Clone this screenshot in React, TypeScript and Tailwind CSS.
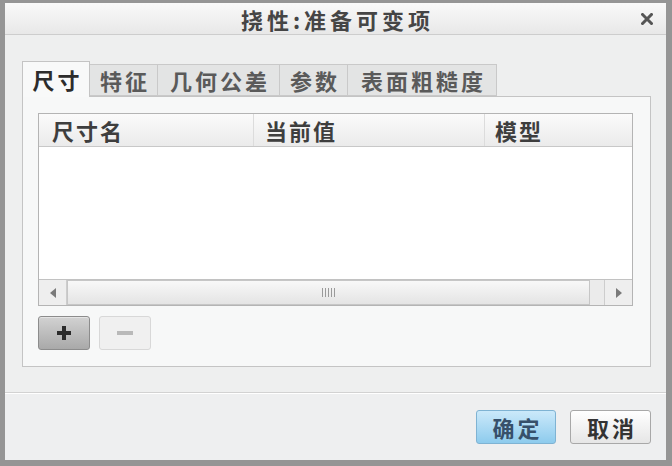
import React from 'react';

const cjk = { fontFamily: '"Noto Sans CJK SC", "Noto Sans", sans-serif' };

const tabs = ['尺寸', '特征', '几何公差', '参数', '表面粗糙度'];
const tabWidths = ['w-[68px]', 'w-[68px]', 'w-[122px]', 'w-[68px]', 'w-[149px]'];

export default function App() {
  return (
    <div
      style={cjk}
      className="w-[672px] h-[466px] flex flex-col bg-[#ececec] border-[#959595] border-l-[5px] border-r-[6px] border-t-[3px] border-b-[6px]"
    >
      {/* title bar */}
      <div className="relative h-[32px] flex items-center justify-center border-b border-[#cdcdcd] bg-gradient-to-b from-[#f9f9f9] to-[#e8e8e8]">
        <span className="text-[22px] font-bold tracking-[4px] text-[#454545] leading-none pl-[4px]">挠性:准备可变项</span>
        <svg className="absolute right-[13px] top-[10px]" width="12" height="12" viewBox="0 0 12 12">
          <path d="M1.5 1.5 L10.5 10.5 M10.5 1.5 L1.5 10.5" stroke="#555" strokeWidth="3" strokeLinecap="square" />
        </svg>
      </div>

      {/* body */}
      <div className="flex-1 flex flex-col pt-[26px] bg-[#eeefef]">
        <div className="pl-[17px] pr-[15px]">
          {/* tabs */}
          <div className="flex items-end h-[35px]">
            {tabs.map((t, i) => (
              <div
                key={t}
                className={
                  i === 0
                    ? `${tabWidths[i]} relative z-10 -mb-px h-[36px] flex items-center justify-center bg-[#f8f9f9] border border-b-0 border-[#c4c4c4] text-[22px] font-bold tracking-[3px] text-[#2c2c2c]`
                    : `${tabWidths[i]} h-[32px] flex items-center justify-center bg-[#e3e4e4] border border-l-0 border-[#c9c9c9] text-[22px] font-bold tracking-[3px] text-[#5a5a5a]`
                }
              >
                <span className="pl-[3px]">{t}</span>
              </div>
            ))}
          </div>

          {/* panel */}
          <div className="h-[271px] border border-[#c4c4c4] bg-[#f7f8f8] pt-[16px] pl-[15px]">
            {/* table */}
            <div className="w-[595px] h-[193px] border border-[#b4b4b4] flex flex-col bg-white">
              <div className="h-[33px] flex border-b border-[#c8c8c8] bg-gradient-to-b from-[#fbfbfb] to-[#ebebeb] text-[22px] font-bold tracking-[2px] text-[#3e3e3e]">
                <div className="w-[215px] pl-[13px] flex items-center border-r border-[#dcdcdc]">尺寸名</div>
                <div className="w-[231px] pl-[11px] flex items-center border-r border-[#dcdcdc]">当前值</div>
                <div className="flex-1 pl-[10px] flex items-center">模型</div>
              </div>
              <div className="flex-1 bg-white" />
              {/* scrollbar */}
              <div className="h-[26px] flex border-t border-[#c2c2c2] bg-[#ececec]">
                <div className="w-[28px] flex items-center justify-center border-r border-[#cdcdcd] bg-[#eeeeee]">
                  <span className="w-0 h-0 border-y-[5px] border-y-transparent border-r-[6px] border-r-[#7a7a7a]" />
                </div>
                <div className="flex-1 flex items-center justify-center border border-[#c6c6c6] bg-gradient-to-b from-[#f8f8f8] to-[#e4e4e4]">
                  <div className="flex gap-[2px]">
                    {[0, 1, 2, 3, 4].map(k => (
                      <span key={k} className="w-px h-[9px] bg-[#9a9a9a]" />
                    ))}
                  </div>
                </div>
                <div className="w-[14px] bg-[#ebebeb]" />
                <div className="w-[28px] flex items-center justify-center border-l border-[#cdcdcd] bg-[#eeeeee]">
                  <span className="w-0 h-0 border-y-[5px] border-y-transparent border-l-[6px] border-l-[#7a7a7a]" />
                </div>
              </div>
            </div>

            {/* add / remove */}
            <div className="flex gap-[9px] mt-[10px]">
              <div className="w-[52px] h-[34px] flex items-center justify-center rounded-[3px] border border-[#8c8c8c] bg-gradient-to-b from-[#d2d2d2] to-[#a9a9a9] shadow-[inset_0_1px_0_#e4e4e4]">
                <svg width="16" height="16" viewBox="0 0 16 16">
                  <rect x="6" y="1" width="4" height="14" fill="#2b2b2b" />
                  <rect x="1" y="6" width="14" height="4" fill="#2b2b2b" />
                </svg>
              </div>
              <div className="w-[52px] h-[34px] flex items-center justify-center rounded-[3px] border border-[#d8d8d8] bg-[#f0f0f0]">
                <span className="w-[16px] h-[4px] bg-[#b9b9b9]" />
              </div>
            </div>
          </div>
        </div>

        {/* separator */}
        <div className="mt-[25px] h-[2px] border-t border-[#d2d2d2] bg-white" />

        {/* footer */}
        <div className="flex-1 bg-[#eeeff0] flex justify-end items-start pt-[16px] pr-[15px] gap-[14px]">
          <div className="w-[80px] h-[34px] flex items-center justify-center rounded-[3px] border border-[#7fb3d3] bg-gradient-to-b from-[#cbe9fa] to-[#8dcbed] text-[22px] font-bold tracking-[3px] text-[#37506a]">
            <span className="pl-[3px]">确定</span>
          </div>
          <div className="w-[81px] h-[34px] flex items-center justify-center rounded-[3px] border border-[#a8a8a8] bg-gradient-to-b from-[#ffffff] to-[#e6e6e6] text-[22px] font-bold tracking-[3px] text-[#333]">
            <span className="pl-[3px]">取消</span>
          </div>
        </div>
      </div>
    </div>
  );
}
